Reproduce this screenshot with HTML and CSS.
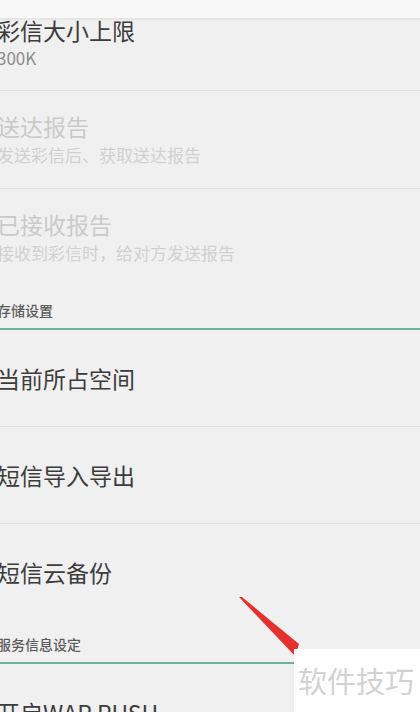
FILE: index.html
```html
<!DOCTYPE html>
<html lang="zh-CN">
<head>
  <meta charset="UTF-8">
  <meta name="viewport" content="width=device-width, initial-scale=1.0">
  <title>信息设置</title>
  <link rel="stylesheet" href="styles.css">
</head>
<body>
  <div class="screen">
    <div class="topbar"></div>

    <div class="pref pref-first">
      <div class="pref-title">彩信大小上限</div>
      <div class="pref-sub">300K</div>
    </div>
    <div class="pref disabled">
      <div class="pref-title">送达报告</div>
      <div class="pref-sub">发送彩信后、获取送达报告</div>
    </div>
    <div class="pref disabled last">
      <div class="pref-title">已接收报告</div>
      <div class="pref-sub">接收到彩信时，给对方发送报告</div>
    </div>

    <div class="category">存储设置</div>
    <div class="pref single">
      <div class="pref-title">当前所占空间</div>
    </div>
    <div class="pref single">
      <div class="pref-title">短信导入导出</div>
    </div>
    <div class="pref single last">
      <div class="pref-title">短信云备份</div>
    </div>

    <div class="category">服务信息设定</div>
    <div class="pref single">
      <div class="pref-title">开启WAP PUSH</div>
    </div>

    <svg class="arrow" width="420" height="712" viewBox="0 0 420 712">
      <polygon points="239,597 242,597 299,644 295,656" fill="#e5302d"/>
    </svg>
    <div class="watermark">软件技巧</div>
  </div>
</body>
</html>
```

FILE: styles.css
```css
body {
  margin: 0;
  background-color: #f0f0f0;
  font-family: "Noto Sans CJK SC", "Noto Sans", Roboto, sans-serif;
}
.screen {
  position: relative;
  width: 420px;
  height: 712px;
  overflow: hidden;
  background-color: #f0f0f0;
}
.topbar {
  height: 18px;
  background-color: #f8f8f8;
  border-bottom: 1px solid #e4e4e4;
  box-shadow: 0 1px 2px rgba(0, 0, 0, 0.05);
}
.pref {
  margin-left: -3px;
  padding: 22px 0 21px;
  border-bottom: 1px solid #dedede;
}
.pref-first {
  padding-top: 0;
  padding-bottom: 20px;
}
.pref-first .pref-title {
  margin-top: -2px;
}
.pref-first .pref-sub {
  margin-top: 3px;
}
.pref.single {
  padding: 35px 0 35px;
}
.pref.last {
  border-bottom: none;
}
.pref-title {
  font-size: 23px;
  line-height: 26px;
  color: #3c3c3c;
}
.pref-sub {
  margin-top: 4px;
  font-size: 17px;
  line-height: 24px;
  color: #8c8c8c;
}
.disabled .pref-title {
  color: #cacaca;
}
.disabled .pref-sub {
  color: #d0d0d0;
}
.category {
  margin-left: -3px;
  padding: 15px 0 9px;
  font-size: 14px;
  line-height: 18px;
  font-weight: 500;
  color: #5c5c5c;
  border-bottom: 2px solid #6bb495;
}
.arrow {
  position: absolute;
  top: 0;
  left: 0;
}
.watermark {
  position: absolute;
  left: 294px;
  top: 649px;
  width: 126px;
  height: 63px;
  padding-left: 4px;
  padding-top: 3px;
  box-sizing: border-box;
  background-color: #fff;
  font-size: 29px;
  line-height: 56px;
  color: #d2d2d2;
}
```
